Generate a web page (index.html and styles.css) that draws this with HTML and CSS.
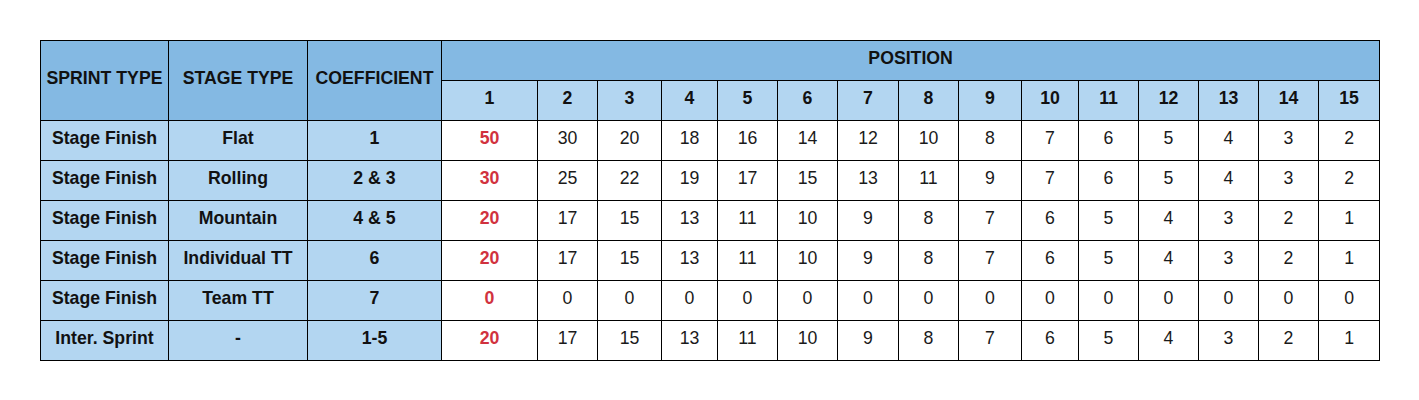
FILE: index.html
```html
<!DOCTYPE html>
<html>
<head>
<meta charset="utf-8">
<link rel="stylesheet" href="styles.css">
</head>
<body>
<table class="pts">
  <colgroup>
    <col class="c-sprint"><col class="c-stage"><col class="c-coef"><col class="c-p1">
    <col class="w60"><col class="w64"><col class="w56"><col class="w60"><col class="w60"><col class="w61">
    <col class="w60"><col class="w63"><col class="w57"><col class="w60"><col class="w60"><col class="w60"><col class="w60"><col class="w61">
  </colgroup>
  <thead>
    <tr>
      <th class="dark" rowspan="2">SPRINT TYPE</th>
      <th class="dark" rowspan="2">STAGE TYPE</th>
      <th class="dark" rowspan="2">COEFFICIENT</th>
      <th class="dark" colspan="15">POSITION</th>
    </tr>
    <tr class="pos">
      <th>1</th><th>2</th><th>3</th><th>4</th><th>5</th><th>6</th><th>7</th><th>8</th><th>9</th><th>10</th><th>11</th><th>12</th><th>13</th><th>14</th><th>15</th>
    </tr>
  </thead>
  <tbody>
    <tr><td class="lbl">Stage Finish</td><td class="lbl">Flat</td><td class="lbl">1</td><td class="first">50</td><td>30</td><td>20</td><td>18</td><td>16</td><td>14</td><td>12</td><td>10</td><td>8</td><td>7</td><td>6</td><td>5</td><td>4</td><td>3</td><td>2</td></tr>
    <tr><td class="lbl">Stage Finish</td><td class="lbl">Rolling</td><td class="lbl">2 &amp; 3</td><td class="first">30</td><td>25</td><td>22</td><td>19</td><td>17</td><td>15</td><td>13</td><td>11</td><td>9</td><td>7</td><td>6</td><td>5</td><td>4</td><td>3</td><td>2</td></tr>
    <tr><td class="lbl">Stage Finish</td><td class="lbl">Mountain</td><td class="lbl">4 &amp; 5</td><td class="first">20</td><td>17</td><td>15</td><td>13</td><td>11</td><td>10</td><td>9</td><td>8</td><td>7</td><td>6</td><td>5</td><td>4</td><td>3</td><td>2</td><td>1</td></tr>
    <tr><td class="lbl">Stage Finish</td><td class="lbl">Individual TT</td><td class="lbl">6</td><td class="first">20</td><td>17</td><td>15</td><td>13</td><td>11</td><td>10</td><td>9</td><td>8</td><td>7</td><td>6</td><td>5</td><td>4</td><td>3</td><td>2</td><td>1</td></tr>
    <tr><td class="lbl">Stage Finish</td><td class="lbl">Team TT</td><td class="lbl">7</td><td class="first">0</td><td>0</td><td>0</td><td>0</td><td>0</td><td>0</td><td>0</td><td>0</td><td>0</td><td>0</td><td>0</td><td>0</td><td>0</td><td>0</td><td>0</td></tr>
    <tr><td class="lbl">Inter. Sprint</td><td class="lbl">-</td><td class="lbl">1-5</td><td class="first">20</td><td>17</td><td>15</td><td>13</td><td>11</td><td>10</td><td>9</td><td>8</td><td>7</td><td>6</td><td>5</td><td>4</td><td>3</td><td>2</td><td>1</td></tr>
  </tbody>
</table>
</body>
</html>
```

FILE: styles.css
```css
html, body {
  margin: 0;
  padding: 0;
  background: #ffffff;
}
body {
  padding: 40px 0 0 40px;
  font-family: "Liberation Sans", Arial, sans-serif;
  font-size: 17.7px;
  color: #1a1a1a;
}
.pts {
  border-collapse: collapse;
  table-layout: fixed;
  width: 1339px;
}
.pts th, .pts td {
  border: 1px solid #000;
  height: 40px;
  padding: 0 0 6px 0;
  box-sizing: border-box;
  text-align: center;
  vertical-align: middle;
  white-space: nowrap;
  line-height: 20px;
}
.pts th {
  font-weight: bold;
  color: #111;
}
.pts th.dark {
  background: #84b9e3;
}
.pts tr.pos th {
  background: #b3d6f1;
}
.pts td.lbl {
  background: #b3d6f1;
  font-weight: bold;
  color: #111;
}
.pts td.first {
  color: #d1323e;
  font-weight: bold;
}
.c-sprint { width: 128px; }
.c-stage { width: 139px; }
.c-coef { width: 134px; }
.c-p1 { width: 96px; }
.w56 { width: 56px; }
.w57 { width: 57px; }
.w60 { width: 60px; }
.w61 { width: 61px; }
.w63 { width: 63px; }
.w64 { width: 64px; }
```
